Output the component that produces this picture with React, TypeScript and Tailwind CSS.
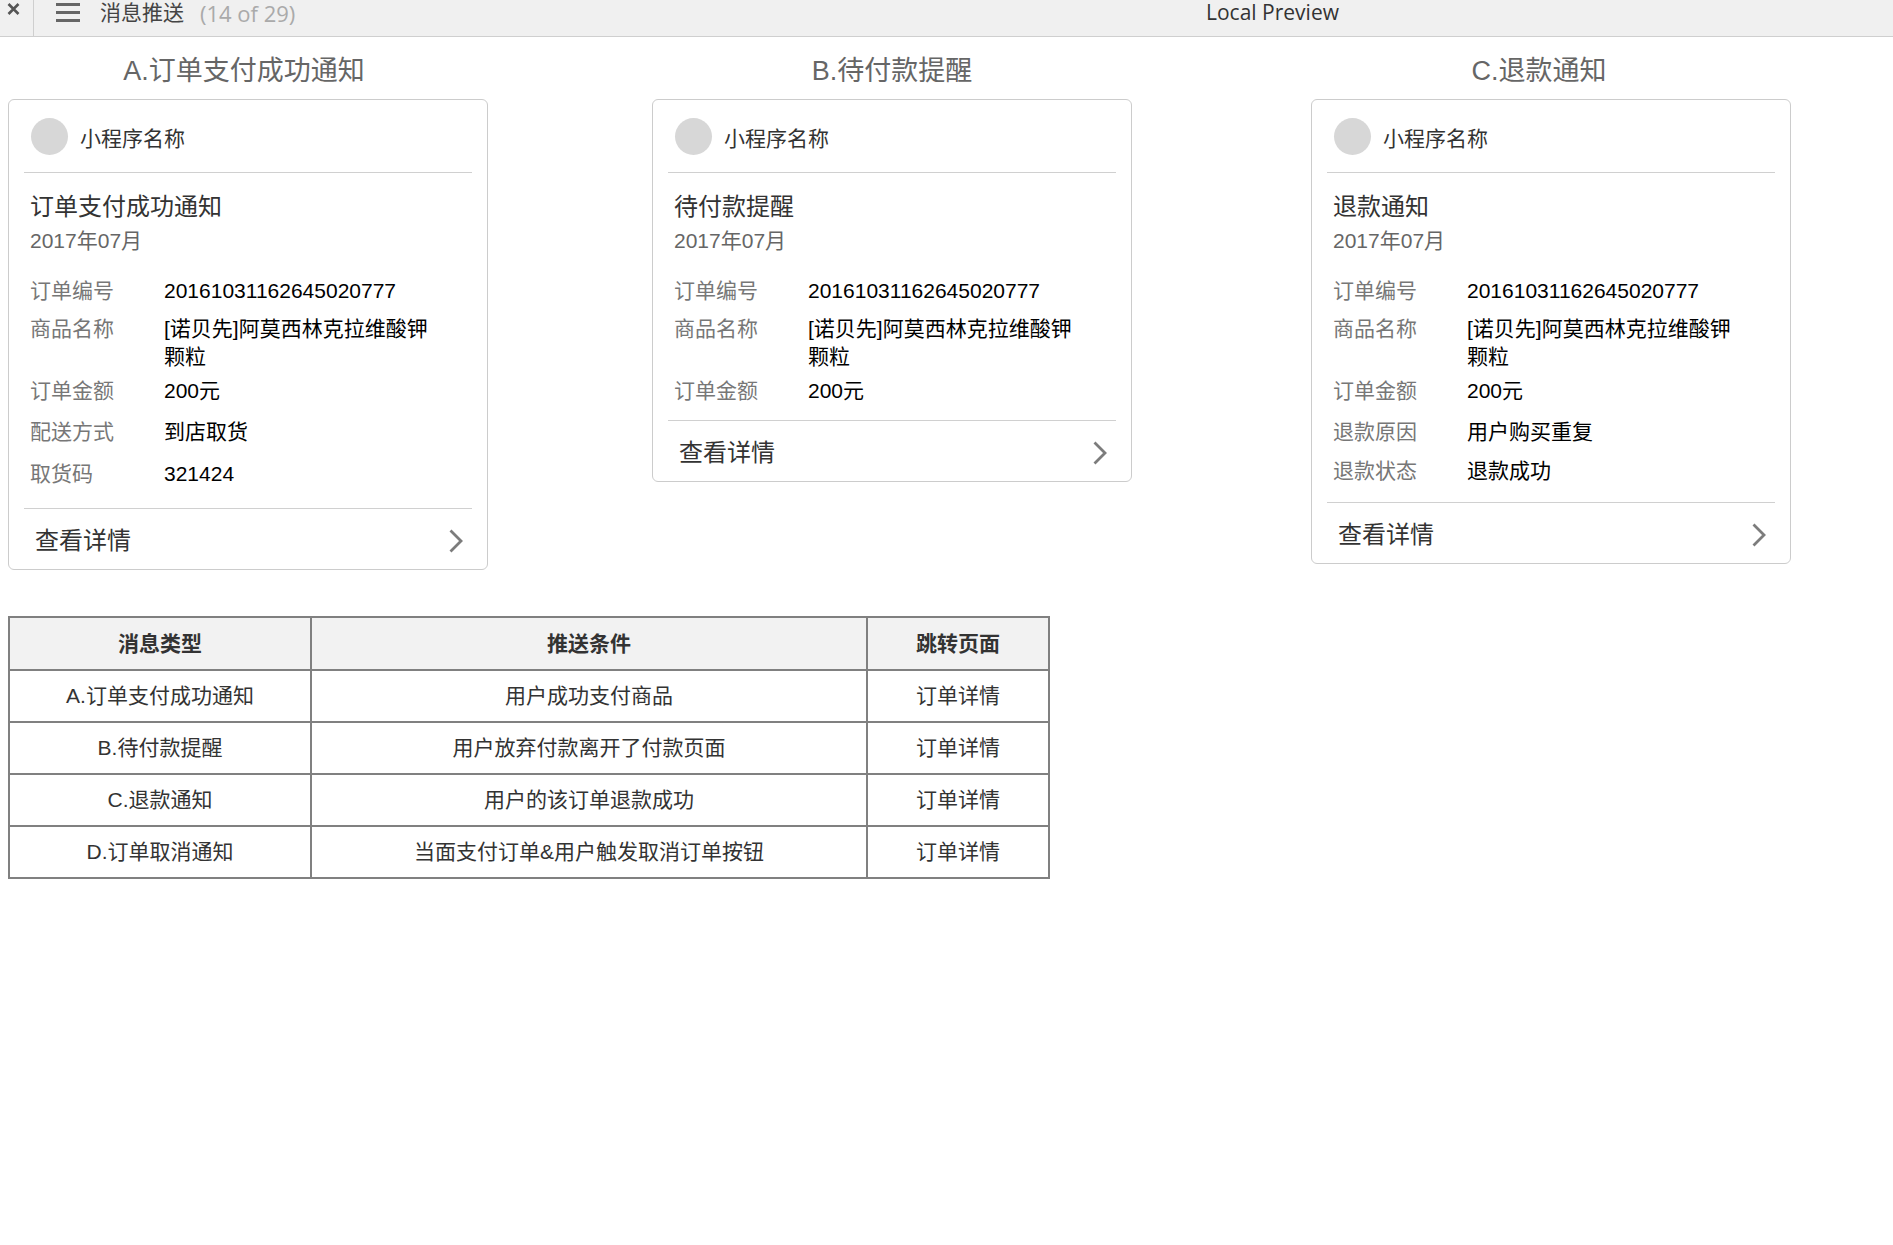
type Row = { label: string; value: string; mt: string };

type Card = {
  heading: string;
  headPad: string;
  colGap: string;
  title: string;
  rows: Row[];
  pb: string;
};

const cards: Card[] = [
  {
    heading: 'A.订单支付成功通知',
    headPad: 'pr-[8px]',
    colGap: '',
    title: '订单支付成功通知',
    rows: [
      { label: '订单编号', value: '20161031162645020777', mt: 'mt-[22px]' },
      { label: '商品名称', value: '[诺贝先]阿莫西林克拉维酸钾颗粒', mt: 'mt-[10px]' },
      { label: '订单金额', value: '200元', mt: 'mt-[6px]' },
      { label: '配送方式', value: '到店取货', mt: 'mt-[13px]' },
      { label: '取货码', value: '321424', mt: 'mt-[14px]' },
    ],
    pb: 'pb-[20px]',
  },
  {
    heading: 'B.待付款提醒',
    headPad: '',
    colGap: 'ml-[164px]',
    title: '待付款提醒',
    rows: [
      { label: '订单编号', value: '20161031162645020777', mt: 'mt-[22px]' },
      { label: '商品名称', value: '[诺贝先]阿莫西林克拉维酸钾颗粒', mt: 'mt-[10px]' },
      { label: '订单金额', value: '200元', mt: 'mt-[6px]' },
    ],
    pb: 'pb-[15px]',
  },
  {
    heading: 'C.退款通知',
    headPad: 'pr-[24px]',
    colGap: 'ml-[179px]',
    title: '退款通知',
    rows: [
      { label: '订单编号', value: '20161031162645020777', mt: 'mt-[22px]' },
      { label: '商品名称', value: '[诺贝先]阿莫西林克拉维酸钾颗粒', mt: 'mt-[10px]' },
      { label: '订单金额', value: '200元', mt: 'mt-[6px]' },
      { label: '退款原因', value: '用户购买重复', mt: 'mt-[13px]' },
      { label: '退款状态', value: '退款成功', mt: 'mt-[11px]' },
    ],
    pb: 'pb-[17px]',
  },
];

const tableRows = [
  ['A.订单支付成功通知', '用户成功支付商品', '订单详情'],
  ['B.待付款提醒', '用户放弃付款离开了付款页面', '订单详情'],
  ['C.退款通知', '用户的该订单退款成功', '订单详情'],
  ['D.订单取消通知', '当面支付订单&用户触发取消订单按钮', '订单详情'],
];

function TopBar() {
  return (
    <div className="flex h-[37px] items-start border-b border-[#cfcfcf] bg-[#f0f0f0] font-['Open_Sans','Noto_Sans_CJK_SC',sans-serif]">
      <div className="flex w-[1206px] shrink-0 items-start self-stretch">
        <div className="flex h-full w-[34px] justify-center border-r border-[#cfcfcf] pt-[3px]">
          <svg width="13" height="12" viewBox="0 0 13 12" className="ml-[-7px]">
            <path d="M1.5 1 L11.5 11 M11.5 1 L1.5 11" stroke="#555" strokeWidth="2.6" />
          </svg>
        </div>
        <svg width="24" height="24" viewBox="0 0 24 24" className="ml-[22px]">
          <rect x="0" y="3" width="24" height="3" fill="#666" />
          <rect x="0" y="11" width="24" height="3" fill="#666" />
          <rect x="0" y="19" width="24" height="3" fill="#666" />
        </svg>
        <span className="ml-[20px] text-[21px] leading-[24px] text-[#444]">消息推送</span>
        <span className="ml-[16px] text-[22px] leading-[26px] text-[#aaa]">(14 of 29)</span>
      </div>
      <span className="text-[21px] leading-[24px] text-[#333]">Local Preview</span>
    </div>
  );
}

function Chevron() {
  return (
    <svg width="16" height="26" viewBox="0 0 16 26">
      <path d="M2.5 2.5 L13 13 L2.5 23.5" fill="none" stroke="#7c7c7c" strokeWidth="2.8" />
    </svg>
  );
}

function NoticeCard({ card }: { card: Card }) {
  return (
    <div className={`w-[480px] ${card.colGap}`}>
      <div className={`text-center text-[27px] leading-[34px] text-[#666] ${card.headPad}`}>
        {card.heading}
      </div>
      <div className="mt-[11px] rounded-[6px] border border-[#cccccc] bg-white">
        <div className="flex h-[72px] items-center px-[22px]">
          <div className="h-[37px] w-[37px] rounded-full bg-[#d7d7d7]" />
          <span className="ml-[12px] pt-[6px] text-[21px] leading-[28px] text-[#333]">小程序名称</span>
        </div>
        <div className="mx-[15px] h-px bg-[#d0d0d0]" />
        <div className={`px-[21px] pt-[18px] ${card.pb}`}>
          <div className="text-[24px] leading-[32px] text-[#333]">{card.title}</div>
          <div className="mt-[4px] text-[21px] leading-[28px] text-[#666]">2017年07月</div>
          {card.rows.map((row) => (
            <div key={row.label} className={`flex items-start ${row.mt}`}>
              <div className="w-[134px] shrink-0 text-[21px] leading-[28px] text-[#777]">{row.label}</div>
              <div className="w-[272px] text-[21px] leading-[28px] text-black">{row.value}</div>
            </div>
          ))}
        </div>
        <div className="mx-[15px] h-px bg-[#d0d0d0]" />
        <div className="mx-[15px] flex h-[60px] items-center justify-between pl-[11px] pr-[8px] pt-[4px]">
          <span className="text-[24px] leading-[32px] text-[#333]">查看详情</span>
          <Chevron />
        </div>
      </div>
    </div>
  );
}

export default function App() {
  return (
    <div className="min-h-screen bg-white font-['Liberation_Sans','Noto_Sans_CJK_SC',sans-serif]">
      <TopBar />
      <div className="flex items-start pl-[8px] pt-[17px]">
        {cards.map((card) => (
          <NoticeCard key={card.heading} card={card} />
        ))}
      </div>
      <table className="ml-[8px] mt-[46px] table-fixed border-collapse text-[21px] text-[#333]">
        <colgroup>
          <col className="w-[302px]" />
          <col className="w-[556px]" />
          <col className="w-[182px]" />
        </colgroup>
        <thead>
          <tr className="h-[53px] bg-[#f2f2f2]">
            <th className="border-2 border-[#808080] font-bold">消息类型</th>
            <th className="border-2 border-[#808080] font-bold">推送条件</th>
            <th className="border-2 border-[#808080] font-bold">跳转页面</th>
          </tr>
        </thead>
        <tbody>
          {tableRows.map((row) => (
            <tr key={row[0]} className="h-[52px]">
              {row.map((cell, i) => (
                <td key={i} className="border-2 border-[#808080] text-center">
                  {cell}
                </td>
              ))}
            </tr>
          ))}
        </tbody>
      </table>
    </div>
  );
}
